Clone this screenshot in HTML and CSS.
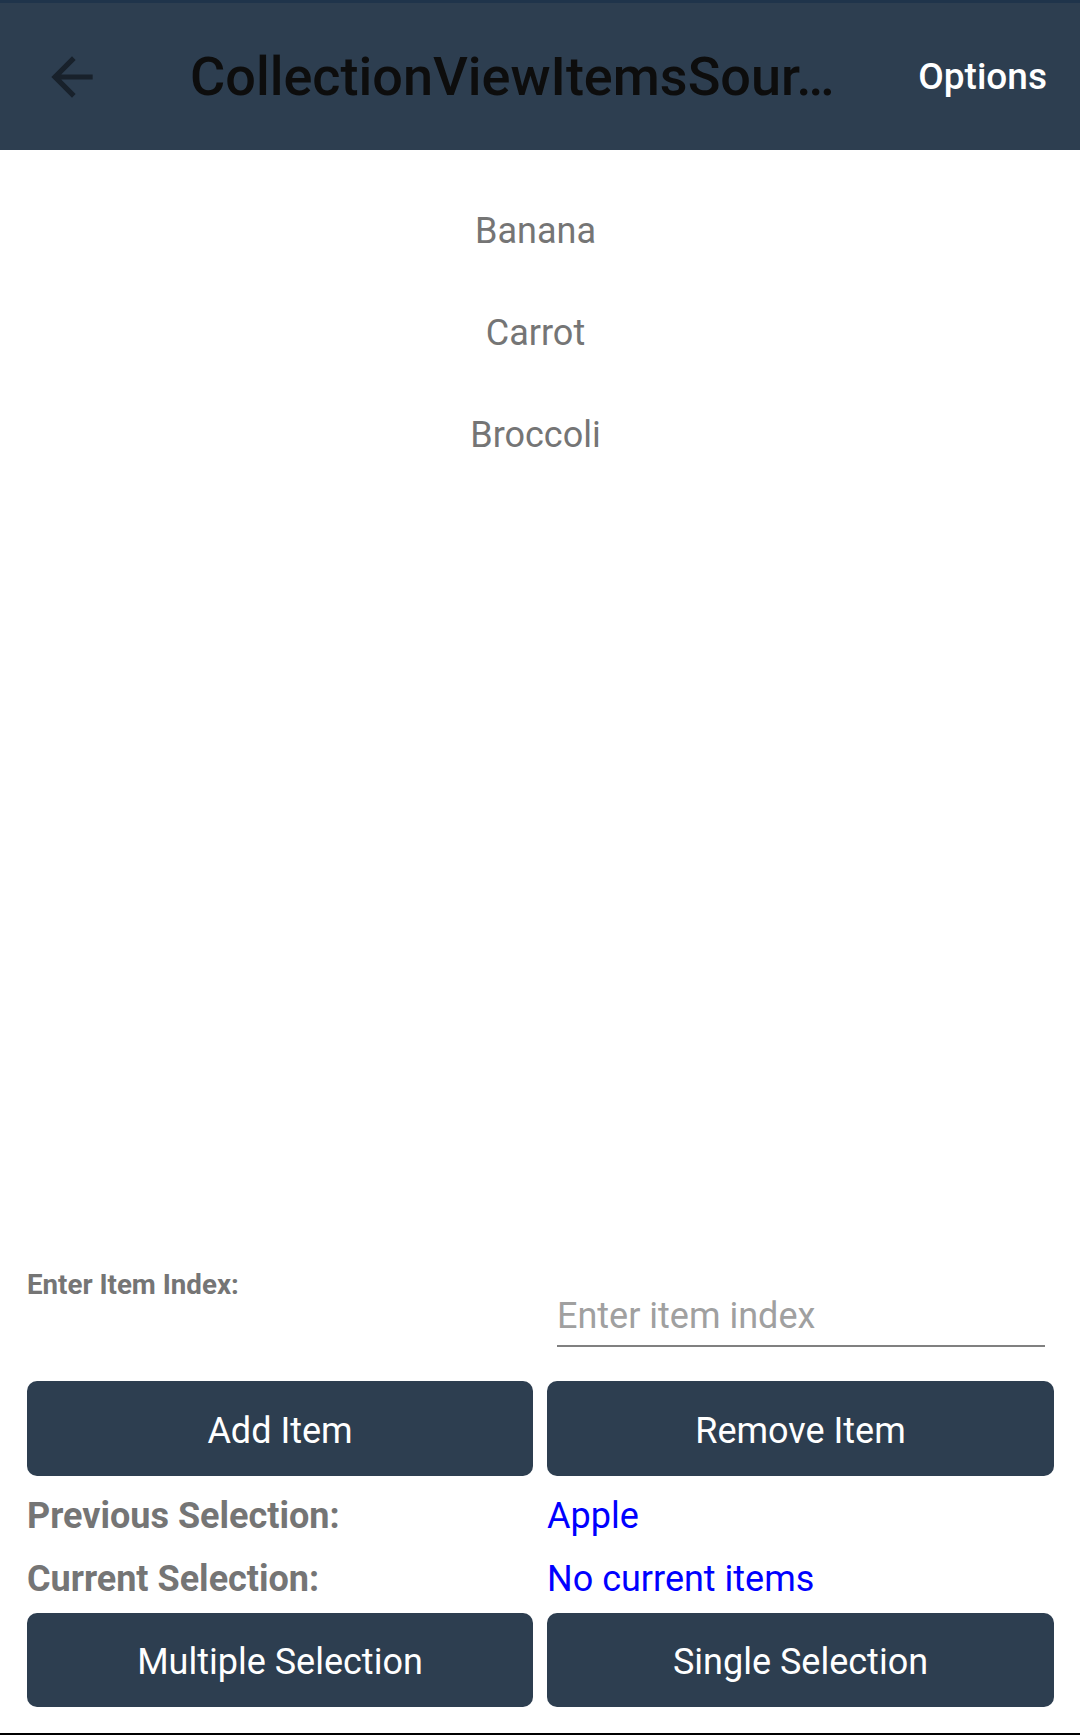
FILE: index.html
```html
<!DOCTYPE html>
<html>
<head>
<meta charset="utf-8">
<link rel="stylesheet" href="styles.css">
</head>
<body>
<div class="page">
  <header class="toolbar">
    <svg class="back" viewBox="0 0 24 24" width="62" height="62"><path d="M20 11H7.83l5.59-5.59L12 4l-8 8 8 8 1.41-1.41L7.83 13H20v-2z" fill="#18212b"/></svg>
    <div class="title">CollectionViewItemsSour…</div>
    <div class="options">Options</div>
  </header>
  <main class="list">
    <div class="item">Banana</div>
    <div class="item">Carrot</div>
    <div class="item">Broccoli</div>
  </main>
  <section class="panel">
    <div class="label-sm">Enter Item Index:</div>
    <div class="entry">Enter item index</div>
    <div class="btn btn-top">Add Item</div>
    <div class="btn btn-top">Remove Item</div>
    <div class="sel-label sel-first">Previous Selection:</div>
    <div class="sel-value sel-first">Apple</div>
    <div class="sel-label sel-second">Current Selection:</div>
    <div class="sel-value sel-second">No current items</div>
    <div class="btn btn-bottom">Multiple Selection</div>
    <div class="btn btn-bottom">Single Selection</div>
  </section>
  <div class="bottom-line"></div>
</div>
</body>
</html>
```

FILE: styles.css
```css
html, body {
  margin: 0;
  padding: 0;
  background: #ffffff;
}
body {
  font-family: Roboto, "Noto Sans", "Liberation Sans", sans-serif;
}
.page {
  width: 1080px;
  height: 1735px;
  display: flex;
  flex-direction: column;
}
.toolbar {
  height: 147px;
  flex: none;
  background: #2d3e50;
  border-top: 3px solid #1f344b;
  display: flex;
  align-items: center;
}
.back {
  flex: none;
  margin-left: 41px;
  display: block;
}
.title {
  margin-left: 87px;
  width: 690px;
  font-size: 54px;
  font-weight: 500;
  color: #0d0d0d;
  white-space: nowrap;
  overflow: hidden;
  text-overflow: ellipsis;
}
.options {
  margin-left: auto;
  margin-right: 33px;
  font-size: 37px;
  font-weight: 500;
  color: #ffffff;
}
.list {
  flex: 1;
  padding-top: 30px;
  padding-right: 9px;
}
.item {
  height: 102px;
  line-height: 102px;
  text-align: center;
  font-size: 36px;
  color: #757575;
}
.panel {
  flex: none;
  display: grid;
  grid-template-columns: 506px 507px;
  column-gap: 14px;
  padding: 0 26px 0 27px;
}
.label-sm {
  font-size: 27.7px;
  line-height: 32px;
  font-weight: 700;
  color: #757575;
  align-self: start;
}
.entry {
  margin: 25px 9px 0 10px;
  font-size: 36px;
  line-height: 44px;
  color: #a0a0a0;
  padding-bottom: 7px;
  border-bottom: 2px solid #808080;
}
.btn {
  background: #2d3e50;
  color: #ffffff;
  border-radius: 10px;
  font-size: 36px;
  display: flex;
  align-items: center;
  justify-content: center;
  box-sizing: border-box;
  padding-top: 4px;
}
.btn-top {
  margin-top: 34px;
  height: 95px;
}
.btn-bottom {
  margin-top: 3px;
  height: 94px;
}
.sel-label {
  font-size: 36px;
  line-height: 61px;
  font-weight: 700;
  color: #757575;
}
.sel-value {
  font-size: 36px;
  line-height: 61px;
  color: #0000ff;
}
.sel-first {
  margin-top: 10px;
}
.sel-second {
  margin-top: 2px;
}
.bottom-line {
  margin-top: 26px;
  height: 2px;
  background: #000000;
  flex: none;
}
```
